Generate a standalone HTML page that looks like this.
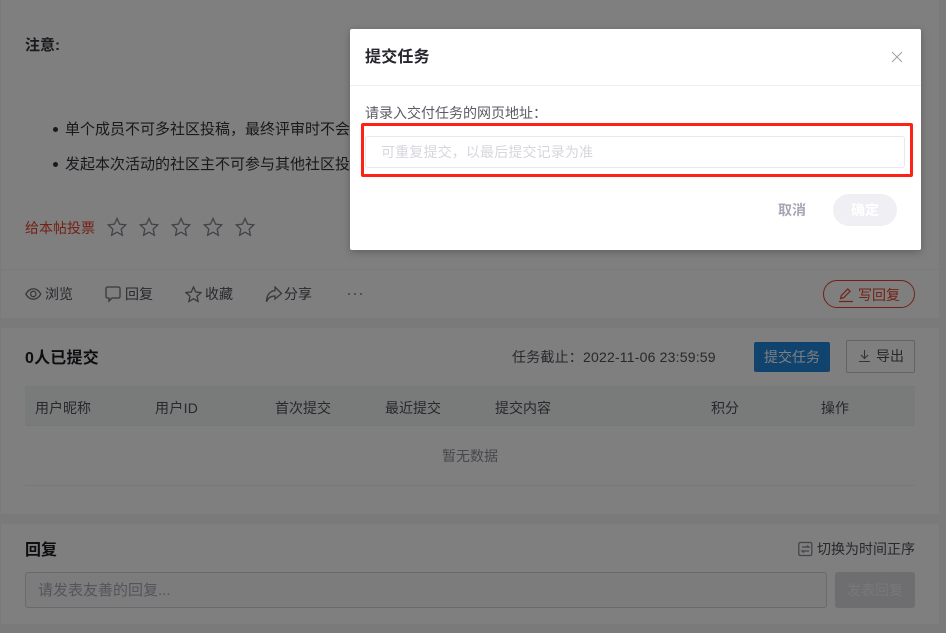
<!DOCTYPE html>
<html lang="zh-CN"><head><meta charset="utf-8">
<style>
html,body{margin:0;padding:0;width:946px;height:633px;overflow:hidden;background:#f4f5f7;font-family:"Liberation Sans","Noto Sans CJK SC",sans-serif;font-size:14px;color:#50505a}
.a{position:absolute;white-space:nowrap;line-height:20px}
.card{position:absolute;left:1px;width:938px;background:#fff}
.ov{position:absolute;left:0;top:0;width:946px;height:633px;background:rgba(0,0,0,.5)}
svg{position:absolute;fill:none}
</style></head><body>
<div class="card" style="top:0;height:269px"></div>
<div class="card" style="top:270px;height:48px"></div>
<div class="card" style="top:328px;height:186px"></div>
<div class="card" style="top:524px;height:100px"></div>

<div class="a" style="left:25px;top:36px;font-size:15px;font-weight:700;color:#33333a">注意:</div>
<div class="a" style="left:53px;top:127px;width:5px;height:5px;border-radius:50%;background:#33333a"></div>
<div class="a" style="left:65px;top:120px;font-size:15px;color:#33333a">单个成员不可多社区投稿，最终评审时不会</div>
<div class="a" style="left:53px;top:162px;width:5px;height:5px;border-radius:50%;background:#33333a"></div>
<div class="a" style="left:65px;top:155px;font-size:15px;color:#33333a">发起本次活动的社区主不可参与其他社区投</div>
<div class="a" style="left:25px;top:218px;color:#e8432a">给本帖投票</div>
<svg style="left:107px;top:217px" width="150" height="20" stroke="#85858f" stroke-width="1.3"><defs><path id="s" d="M10 1.500l2.600 5.700 6.100.7-4.500 4.200 1.200 6.100L10 15.200l-5.400 3 1.200-6.100L1.300 7.900l6.100-.7z"/></defs><use href="#s"/><use href="#s" x="32"/><use href="#s" x="64"/><use href="#s" x="96"/><use href="#s" x="128"/></svg>

<svg style="left:25px;top:286px" width="17" height="16" stroke="#707078" stroke-width="1.300"><path d="M.8 8C3 4.300 5.500 2.800 8.300 2.800S13.700 4.300 15.800 8c-2.100 3.700-4.700 5.200-7.500 5.200S3 11.700.8 8z"/><circle cx="8.300" cy="8" r="2.700"/></svg>
<div class="a" style="left:45px;top:284px">浏览</div>
<svg style="left:105px;top:286px" width="16" height="17" stroke="#707078" stroke-width="1.300"><path d="M2.500 1h11a1.500 1.500 0 0 1 1.500 1.500v8a1.500 1.500 0 0 1-1.500 1.500H7l-3 3v-3H2.500A1.500 1.500 0 0 1 1 10.500v-8A1.500 1.500 0 0 1 2.500 1z"/></svg>
<div class="a" style="left:125px;top:284px">回复</div>
<svg style="left:185px;top:286px" width="17" height="17" stroke="#707078" stroke-width="1.300"><path d="M8.500 1l2.200 5 5.300.6-4 3.600 1.100 5.300-4.600-2.700-4.600 2.700 1.100-5.300-4-3.600 5.300-.6z"/></svg>
<div class="a" style="left:205px;top:284px">收藏</div>
<svg style="left:265px;top:286px" width="18" height="17" stroke="#707078" stroke-width="1.300"><path d="M10 1l6.500 6.500-6.500 5.500V10C6 10 3 11.500 1.500 15.800 1.500 9 5 5 10 4.500z"/></svg>
<div class="a" style="left:284px;top:284px">分享</div>
<div class="a" style="left:348px;top:293px;width:2px;height:2px;background:#a0a0ac;box-shadow:6px 0 #a0a0ac,12px 0 #a0a0ac"></div>

<div class="a" style="left:823px;top:280px;width:90px;height:26px;border:1px solid #e8432a;border-radius:14px"></div>
<svg style="left:838px;top:287px" width="16" height="16" stroke="#e8432a" stroke-width="1.2"><path d="M1 14.500h14M2.500 11.500l.8-3L9.800 2l2.300 2.300-6.500 6.500z"/></svg>
<div class="a" style="left:858px;top:285px;color:#e8432a">写回复</div>

<div class="a" style="left:25px;top:349px;font-size:16px;font-weight:700;letter-spacing:.2px;color:#1c1c22">0人已提交</div>
<div class="a" style="left:512px;top:347px;letter-spacing:.2px">任务截止：2022-11-06 23:59:59</div>
<div class="a" style="left:754px;top:342px;width:76px;height:30px;background:#2088de;border-radius:2px;color:#fff;text-align:center;line-height:30px">提交任务</div>
<div class="a" style="left:846px;top:340px;width:67px;height:31px;border:1px solid #c5c5d0;border-radius:2px"></div>
<svg style="left:858px;top:349px" width="13" height="14" stroke="#666" stroke-width="1.1"><path d="M6.500 1v8M3 6l3.500 3.500L10 6M1 12.500h11"/></svg>
<div class="a" style="left:876px;top:346px">导出</div>

<div class="a" style="left:25px;top:386px;width:890px;height:40px;background:#f2f5f5;border-top:1px solid #eef0f0;border-bottom:1px solid #eef0f0;box-sizing:border-box"></div>
<div class="a" style="left:35px;top:398px">用户昵称</div>
<div class="a" style="left:155px;top:398px;letter-spacing:.3px">用户ID</div>
<div class="a" style="left:275px;top:398px">首次提交</div>
<div class="a" style="left:385px;top:398px">最近提交</div>
<div class="a" style="left:495px;top:398px">提交内容</div>
<div class="a" style="left:711px;top:398px">积分</div>
<div class="a" style="left:821px;top:398px">操作</div>
<div class="a" style="left:442px;top:446px;color:#8e8e9a">暂无数据</div>
<div class="a" style="left:25px;top:485px;width:890px;height:1px;background:#eef0f0"></div>

<div class="a" style="left:25px;top:541px;font-size:16px;font-weight:700;color:#1c1c22">回复</div>
<svg style="left:798px;top:541px" width="15" height="16" stroke="#85858f" stroke-width="1.2"><rect x=".8" y="1.500" width="13" height="13" rx="1.500"/><path d="M4 6h7L9 4.500M11 10H4l2 1.500"/></svg>
<div class="a" style="left:817px;top:539px">切换为时间正序</div>
<div class="a" style="left:25px;top:572px;width:800px;height:34px;border:1px solid #d4d4dc;border-radius:3px;background:#f8f9fb"></div>
<div class="a" style="left:38px;top:581px;font-size:15px;color:#a8a8b4">请发表友善的回复...</div>
<div class="a" style="left:835px;top:572px;width:80px;height:36px;background:#dcdce2;border-radius:3px;color:#f0f0f4;text-align:center;line-height:36px">发表回复</div>

<div class="ov"></div>

<div style="position:absolute;left:350px;top:29px;width:571px;height:221px;background:#fff;border-radius:2px;box-shadow:0 2px 8px rgba(0,0,0,.25)"></div>
<div class="a" style="left:365px;top:47px;font-size:16px;line-height:22px;font-weight:700;letter-spacing:.2px;color:#26262c">提交任务</div>
<svg style="left:891px;top:51px" width="12" height="12" stroke="#a0a0ac" stroke-width="1"><path d="M1 1l10 10M11 1L1 11"/></svg>
<div class="a" style="left:350px;top:85px;width:571px;height:1px;background:#eeeef1"></div>
<div class="a" style="left:365px;top:103px;color:#5b5b66">请录入交付任务的网页地址：</div>
<div class="a" style="left:365px;top:136px;width:538px;height:30px;border:1px solid #e8e8ee;border-radius:3px"></div>
<div class="a" style="left:381px;top:142px;letter-spacing:.15px;color:#d6d6de">可重复提交，以最后提交记录为准</div>
<div class="a" style="left:361px;top:123px;width:546px;height:48px;border:3px solid #ff2116;border-radius:2px"></div>
<div class="a" style="left:778px;top:200px;font-weight:700;color:#a6a6b4">取消</div>
<div class="a" style="left:833px;top:194px;width:64px;height:32px;border-radius:16px;background:#f0f0f4;color:#fff;font-weight:700;text-align:center;line-height:32px">确定</div>
</body></html>
